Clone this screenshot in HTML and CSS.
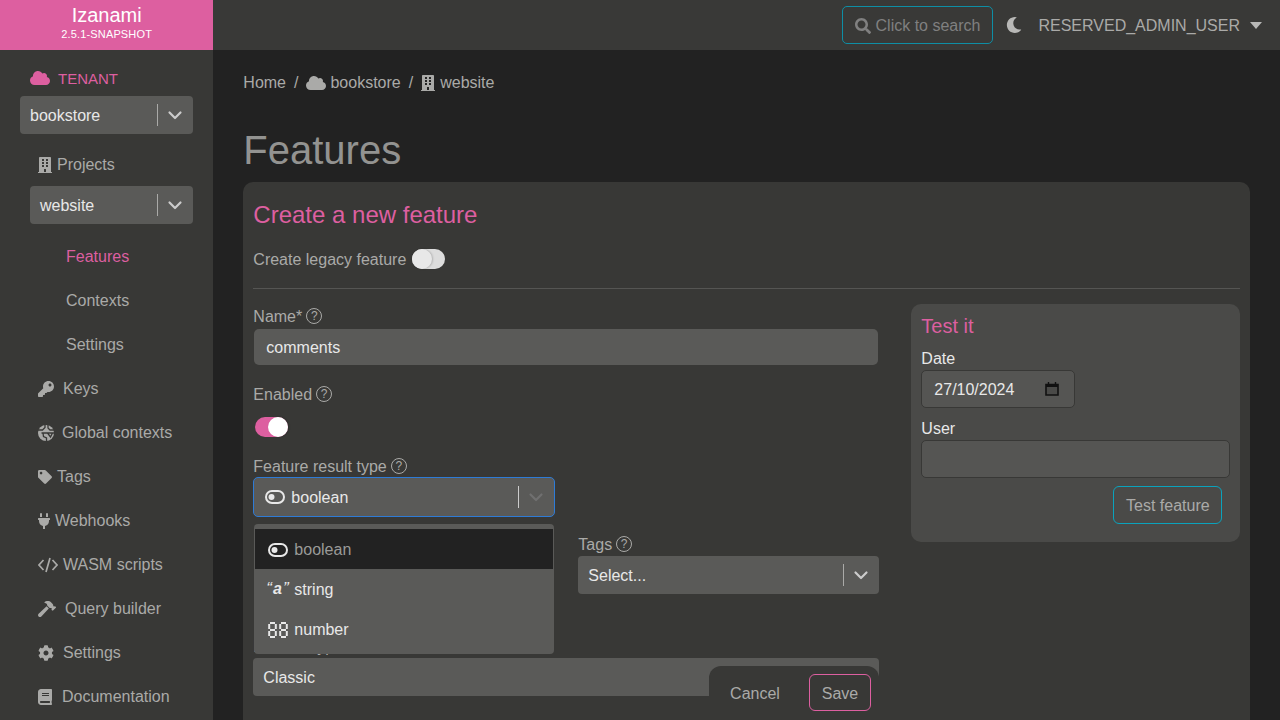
FILE: index.html
```html
<!DOCTYPE html>
<html lang="en">
<head>
    <meta charset="UTF-8">
    <meta name="viewport" content="width=device-width, initial-scale=1.0">
    <title>Izanami - Features</title>
    <link rel="stylesheet" href="styles.css">
</head>
<body>

    <!-- Icons used more than once -->
    <svg class="sprite" xmlns="http://www.w3.org/2000/svg">
        <symbol id="i-cloud" viewBox="0 0 640 512"><path d="M537.6 226.6c4.1-10.7 6.4-22.4 6.4-34.6 0-53-43-96-96-96-19.7 0-38.1 6-53.3 16.2C367 64.2 315.3 32 256 32c-88.4 0-160 71.6-160 160 0 2.7.1 5.4.2 8.1C40.2 219.8 0 273.2 0 336c0 79.5 64.5 144 144 144h368c70.7 0 128-57.3 128-128 0-61.9-44-113.6-102.4-125.4z"/></symbol>
        <symbol id="i-building" viewBox="0 0 448 512"><path d="M436 480h-20V24c0-13.255-10.745-24-24-24H56C42.745 0 32 10.745 32 24v456H12c-6.627 0-12 5.373-12 12v20h448v-20c0-6.627-5.373-12-12-12zM128 76c0-6.627 5.373-12 12-12h40c6.627 0 12 5.373 12 12v40c0 6.627-5.373 12-12 12h-40c-6.627 0-12-5.373-12-12V76zm0 96c0-6.627 5.373-12 12-12h40c6.627 0 12 5.373 12 12v40c0 6.627-5.373 12-12 12h-40c-6.627 0-12-5.373-12-12v-40zm52 148h-40c-6.627 0-12-5.373-12-12v-40c0-6.627 5.373-12 12-12h40c6.627 0 12 5.373 12 12v40c0 6.627-5.373 12-12 12zm76 160h-64v-84c0-6.627 5.373-12 12-12h40c6.627 0 12 5.373 12 12v84zm64-172c0 6.627-5.373 12-12 12h-40c-6.627 0-12-5.373-12-12v-40c0-6.627 5.373-12 12-12h40c6.627 0 12 5.373 12 12v40zm0-96c0 6.627-5.373 12-12 12h-40c-6.627 0-12-5.373-12-12v-40c0-6.627 5.373-12 12-12h40c6.627 0 12 5.373 12 12v40zm0-96c0 6.627-5.373 12-12 12h-40c-6.627 0-12-5.373-12-12V76c0-6.627 5.373-12 12-12h40c6.627 0 12 5.373 12 12v40z"/></symbol>
        <symbol id="i-chevron" viewBox="0 0 20 20"><path d="M4.5 7.5 10 13l5.500-5.500" fill="none" stroke="currentColor" stroke-width="2.200" stroke-linecap="round" stroke-linejoin="round"/></symbol>
        <symbol id="i-toggle" viewBox="0 0 20 14"><rect x="1" y="1" width="18" height="12" rx="6" fill="none" stroke="currentColor" stroke-width="2"/><circle cx="6.500" cy="7" r="3" fill="currentColor"/></symbol>
    </svg>

    <div class="app">
        <aside class="sidebar">
            <div class="brand">
                <div class="brand-name">Izanami</div>
                <div class="brand-version">2.5.1-SNAPSHOT</div>
            </div>

            <nav class="side-nav">
                <div class="tenant-title">
                    <svg class="icon icon-cloud"><use href="#i-cloud"/></svg>
                    <span>TENANT</span>
                </div>
                <div class="select side-select tenant-select">
                    <span class="select-value">bookstore</span>
                    <span class="select-sep"></span>
                    <svg class="select-arrow"><use href="#i-chevron"/></svg>
                </div>

                <a class="nav-item nav-projects">
                    <svg class="icon icon-building"><use href="#i-building"/></svg>
                    <span>Projects</span>
                </a>
                <div class="select side-select project-select">
                    <span class="select-value">website</span>
                    <span class="select-sep"></span>
                    <svg class="select-arrow"><use href="#i-chevron"/></svg>
                </div>

                <div class="sub-nav">
                    <a class="sub-item active">Features</a>
                    <a class="sub-item">Contexts</a>
                    <a class="sub-item">Settings</a>
                </div>

                <a class="nav-item">
                    <svg class="icon" viewBox="0 0 512 512"><path d="M512 176.001C512 273.203 433.202 352 336 352c-11.22 0-22.19-1.062-32.827-3.069l-24.012 27.014A23.999 23.999 0 0 1 261.223 384H224v40c0 13.255-10.745 24-24 24h-40v40c0 13.255-10.745 24-24 24H24c-13.255 0-24-10.745-24-24v-78.059c0-6.365 2.529-12.47 7.029-16.971l161.802-161.802C163.108 213.814 160 195.271 160 176 160 78.798 238.797.001 335.999 0 433.488-.001 512 78.511 512 176.001zM336 128c0 26.51 21.49 48 48 48s48-21.49 48-48-21.49-48-48-48-48 21.49-48 48z"/></svg>
                    <span class="gap-9">Keys</span>
                </a>
                <a class="nav-item">
                    <svg class="icon" viewBox="0 0 16 16"><circle cx="8" cy="8" r="8"/><path d="M0 5h4.500L7 2.500V0M10 0v3l2 2h4M3.500 8H16M5 8l.5 3.500L8.500 13v3M9.500 8l3 4 2-4" fill="none" stroke="#383836" stroke-width="1.300"/></svg>
                    <span class="gap-8">Global contexts</span>
                </a>
                <a class="nav-item">
                    <svg class="icon icon-small" viewBox="0 0 512 512"><path d="M0 252.118V48C0 21.49 21.49 0 48 0h204.118a48 48 0 0 1 33.941 14.059l211.882 211.882c18.745 18.745 18.745 49.137 0 67.882L293.823 497.941c-18.745 18.745-49.137 18.745-67.882 0L14.059 286.059A48 48 0 0 1 0 252.118zM112 64c-26.51 0-48 21.49-48 48s21.49 48 48 48 48-21.49 48-48-21.49-48-48-48z"/></svg>
                    <span class="gap-5">Tags</span>
                </a>
                <a class="nav-item">
                    <svg class="icon icon-plug" viewBox="0 0 384 512"><path d="M320,32a32,32,0,0,0-64,0v96h64Zm48,128H16A16,16,0,0,0,0,176v32a16,16,0,0,0,16,16H32v32A160.07,160.07,0,0,0,160,412.8V512h64V412.8A160.07,160.07,0,0,0,352,256V224h16a16,16,0,0,0,16-16V176A16,16,0,0,0,368,160ZM128,32a32,32,0,0,0-64,0v96h64Z"/></svg>
                    <span class="gap-5">Webhooks</span>
                </a>
                <a class="nav-item">
                    <svg class="icon icon-code" viewBox="0 0 20 16"><path d="M5.500 3 1 8l4.500 5M14.500 3 19 8l-4.500 5M12 1 8 15" fill="none" stroke="currentColor" stroke-width="1.700"/></svg>
                    <span class="gap-5">WASM scripts</span>
                </a>
                <a class="nav-item">
                    <svg class="icon icon-hammer" viewBox="0 0 576 512"><path d="M571.31 193.94l-22.63-22.63c-6.25-6.25-16.38-6.25-22.63 0l-11.31 11.31-28.9-28.9c5.63-21.31.36-44.9-16.35-61.61l-45.25-45.25c-62.48-62.48-163.79-62.48-226.28 0l90.51 45.25v18.75c0 16.97 6.74 33.25 18.75 45.25l49.14 49.14c16.71 16.71 40.3 21.98 61.61 16.35l28.9 28.9-11.31 11.31c-6.25 6.25-6.25 16.38 0 22.63l22.63 22.63c6.25 6.25 16.38 6.25 22.63 0l90.51-90.51c6.23-6.24 6.23-16.37-.02-22.62zm-286.72-15.2c-3.7-3.7-6.84-7.79-9.85-11.95L19.64 404.96c-25.57 23.88-26.26 64.19-1.53 88.93s65.05 24.05 88.93-1.53l238.13-255.07c-3.96-2.91-7.9-5.87-11.44-9.41l-49.14-49.14z"/></svg>
                    <span class="gap-9">Query builder</span>
                </a>
                <a class="nav-item">
                    <svg class="icon" viewBox="0 0 512 512"><path d="M487.4 315.7l-42.6-24.6c4.3-23.2 4.3-47 0-70.2l42.6-24.6c4.9-2.8 7.1-8.6 5.5-14-11.1-35.6-30-67.8-54.7-94.6-3.8-4.1-10-5.1-14.8-2.3L380.8 110c-17.9-15.4-38.5-27.3-60.8-35.1V25.800c0-5.600-3.900-10.500-9.400-11.700-36.700-8.200-74.300-7.800-109.200 0-5.500 1.200-9.400 6.100-9.400 11.700V75c-22.200 7.900-42.800 19.800-60.800 35.100L88.700 85.500c-4.900-2.800-11-1.900-14.800 2.300-24.700 26.700-43.600 58.900-54.700 94.600-1.700 5.400.6 11.200 5.500 14L67.300 221c-4.300 23.200-4.300 47 0 70.200l-42.600 24.600c-4.900 2.800-7.100 8.600-5.500 14 11.100 35.600 30 67.800 54.700 94.600 3.800 4.100 10 5.100 14.800 2.300l42.600-24.600c17.900 15.400 38.500 27.300 60.800 35.100v49.200c0 5.600 3.900 10.500 9.400 11.700 36.700 8.200 74.300 7.800 109.200 0 5.500-1.200 9.400-6.100 9.400-11.700v-49.200c22.200-7.900 42.800-19.800 60.800-35.100l42.600 24.600c4.900 2.800 11 1.900 14.800-2.300 24.700-26.700 43.600-58.900 54.700-94.600 1.500-5.500-.7-11.300-5.600-14.100zM256 336c-44.100 0-80-35.900-80-80s35.900-80 80-80 80 35.900 80 80-35.900 80-80 80z"/></svg>
                    <span class="gap-9">Settings</span>
                </a>
                <a class="nav-item">
                    <svg class="icon icon-book" viewBox="0 0 448 512"><path d="M448 360V24c0-13.300-10.700-24-24-24H96C43 0 0 43 0 96v320c0 53 43 96 96 96h328c13.300 0 24-10.700 24-24v-16c0-7.500-3.500-14.300-8.900-18.700-4.200-15.400-4.200-59.300 0-74.700 5.400-4.300 8.900-11.100 8.900-18.600zM128 134c0-3.300 2.700-6 6-6h212c3.300 0 6 2.700 6 6v20c0 3.300-2.700 6-6 6H134c-3.300 0-6-2.700-6-6v-20zm0 64c0-3.300 2.700-6 6-6h212c3.300 0 6 2.700 6 6v20c0 3.300-2.700 6-6 6H134c-3.300 0-6-2.700-6-6v-20zm253.400 250H96c-17.700 0-32-14.300-32-32 0-17.600 14.400-32 32-32h285.400c-1.900 17.100-1.900 46.900 0 64z"/></svg>
                    <span class="gap-10">Documentation</span>
                </a>
            </nav>
        </aside>

        <div class="page">
            <header class="topbar">
                <button class="search-btn">
                    <svg class="icon icon-search" viewBox="0 0 512 512"><path d="M505 442.700L405.300 343c-4.500-4.500-10.600-7-17-7H372c27.600-35.300 44-79.700 44-128C416 93.100 322.900 0 208 0S0 93.100 0 208s93.100 208 208 208c48.300 0 92.700-16.400 128-44v16.300c0 6.400 2.500 12.500 7 17l99.700 99.700c9.400 9.400 24.600 9.400 33.900 0l28.300-28.300c9.400-9.400 9.400-24.600.1-34zM208 336c-70.700 0-128-57.200-128-128 0-70.700 57.200-128 128-128 70.700 0 128 57.200 128 128 0 70.700-57.200 128-128 128z"/></svg>
                    Click to search
                </button>
                <svg class="icon icon-moon" viewBox="0 0 512 512"><path d="M283.211 512c78.962 0 151.079-35.925 198.857-94.792 7.068-8.708-.639-21.430-11.562-19.350-124.203 23.654-238.262-71.576-238.262-196.954 0-72.222 38.662-138.635 101.498-174.394 9.686-5.512 7.250-20.197-3.756-22.230A258.156 258.156 0 0 0 283.211 0c-141.309 0-256 114.511-256 256 0 141.309 114.511 256 256 256z"/></svg>
                <span class="user-name">RESERVED_ADMIN_USER</span>
                <span class="user-caret"></span>
            </header>

            <main class="content">
                <div class="breadcrumb">
                    <a>Home</a>
                    <span class="crumb-sep">/</span>
                    <svg class="icon icon-cloud"><use href="#i-cloud"/></svg>
                    <a class="crumb-tight">bookstore</a>
                    <span class="crumb-sep">/</span>
                    <svg class="icon icon-building"><use href="#i-building"/></svg>
                    <a class="crumb-site">website</a>
                </div>

                <h1>Features</h1>

                <section class="card">
                    <h2>Create a new feature</h2>
                    <div class="legacy-row">
                        <span class="legacy-text">Create legacy feature</span>
                        <span class="switch"><span class="switch-knob"></span></span>
                    </div>
                    <hr>

                    <div class="form-grid">
                        <form class="feature-form">
                            <label class="field-label"><span class="label-text">Name*</span> <span class="help">?</span></label>
                            <div class="text-input name-input">comments</div>

                            <label class="field-label enabled-label"><span class="label-text">Enabled</span> <span class="help">?</span></label>
                            <span class="switch switch-on"><span class="switch-knob"></span></span>

                            <div class="type-field">
                                <label class="field-label"><span class="label-text">Feature result type</span> <span class="help">?</span></label>
                                <div class="select type-select">
                                    <svg class="type-icon"><use href="#i-toggle"/></svg>
                                    <span class="select-value">boolean</span>
                                    <span class="select-sep"></span>
                                    <svg class="select-arrow"><use href="#i-chevron"/></svg>
                                </div>

                                <!-- Open dropdown, sits above the fields below -->
                                <ul class="type-menu">
                                    <li class="selected"><svg class="type-icon"><use href="#i-toggle"/></svg>boolean</li>
                                    <li><span class="quote-icon">“<b>a</b>”</span>string</li>
                                    <li>
                                        <svg class="type-icon number-icon" viewBox="0 0 20 16"><path d="M2 1h5M2 8h5M2 15h5M13 1h5M13 8h5M13 15h5M1.200 2v5M1.200 9v5M7.800 2v5M7.800 9v5M12.200 2v5M12.200 9v5M18.800 2v5M18.800 9v5" fill="none" stroke="currentColor" stroke-width="2"/></svg>number
                                    </li>
                                </ul>
                            </div>

                            <div class="two-cols">
                                <div class="col-blank"></div>
                                <div>
                                    <label class="field-label"><span class="label-text">Tags</span> <span class="help">?</span></label>
                                    <div class="select">
                                        <span class="select-value">Select...</span>
                                        <span class="select-sep"></span>
                                        <svg class="select-arrow"><use href="#i-chevron"/></svg>
                                    </div>
                                </div>
                            </div>

                            <label class="field-label strategy-label"><span class="label-text">Feature type</span></label>
                            <div class="select strategy-select">
                                <span class="select-value">Classic</span>
                            </div>
                        </form>

                        <aside class="test-panel">
                            <h3>Test it</h3>
                            <label class="test-label">Date</label>
                            <div class="test-input date-input">
                                <span class="date-value">27/10/2024</span>
                                <svg class="calendar" viewBox="0 0 14 14"><path d="M1 2.500h12v10.500H1z" fill="#4a4a48" stroke="#111" stroke-width="1.600"/><path d="M1 3h12v2H1z" fill="#111"/><path d="M3.500 0v2M10.500 0v2" stroke="#111" stroke-width="1.400"/></svg>
                            </div>
                            <label class="test-label user-label">User</label>
                            <div class="test-input"></div>
                            <div class="test-actions">
                                <button class="test-btn">Test feature</button>
                            </div>
                        </aside>
                    </div>

                    <div class="form-actions">
                        <button class="cancel-btn">Cancel</button>
                        <button class="save-btn">Save</button>
                    </div>
                </section>
            </main>
        </div>
    </div>

</body>
</html>
```

FILE: styles.css
```css
* {
    box-sizing: border-box;
}

html, body {
    height: 100%;
}

body {
    margin: 0;
    overflow: hidden;
    font-family: "Liberation Sans", Arial, sans-serif;
    font-size: 16px;
    color: #aaaaa8;
    background-color: #222222;
}

.sprite {
    display: none;
}

.icon {
    flex: none;
    width: 16px;
    height: 16px;
    fill: currentColor;
}

.app {
    display: flex;
    height: 720px;
}

/* Sidebar */
.sidebar {
    flex: none;
    width: 213.33px;
    background-color: #383836;
}

.brand {
    height: 50px;
    padding-top: 4px;
    text-align: center;
    color: #ffffff;
    background-color: #dd5fa0;
}

.brand-name {
    font-size: 20px;
    line-height: 22px;
}

.brand-version {
    font-size: 11px;
    line-height: 16px;
    letter-spacing: 0.15px;
}

.side-nav {
    padding: 18px 20px 0;
}

.tenant-title {
    display: flex;
    align-items: center;
    gap: 8px;
    height: 20px;
    padding-left: 10px;
    font-size: 15px;
    color: #dd5fa0;
}

.icon-cloud {
    width: 20px;
}

.tenant-select {
    margin-top: 8px;
}

.nav-item {
    display: flex;
    align-items: center;
    height: 44px;
    padding-top: 2px;
    padding-left: 18px;
}

.nav-projects {
    height: 30px;
    margin-top: 15px;
}

.nav-projects span {
    margin-left: 5px;
}

.nav-projects .icon {
    width: 14px;
}

.project-select {
    margin: 7px 0 10px 10px;
}

.sub-item {
    display: flex;
    align-items: center;
    height: 44px;
    padding-top: 2px;
    padding-left: 46px;
}

.sub-item.active {
    color: #dd5fa0;
}

.gap-5 {
    margin-left: 5px;
}

.gap-8 {
    margin-left: 8px;
}

.gap-9 {
    margin-left: 9px;
}

.gap-10 {
    margin-left: 10px;
}

.icon-small {
    width: 14px;
    height: 14px;
}

.icon-plug {
    width: 12px;
    height: 16px;
}

.icon-code {
    width: 20px;
}

.icon-hammer {
    width: 18px;
}

.icon-book {
    width: 14px;
}

/* Selects */
.select {
    display: flex;
    align-items: center;
    height: 38px;
    padding: 0 8px 0 10px;
    border-radius: 4px;
    color: #e8e8e8;
    background-color: #5a5a58;
}

.select-value {
    flex: 1;
    padding-top: 2px;
}

.select-sep {
    width: 1px;
    height: 22px;
    background-color: #aaaaa8;
}

.select-arrow {
    width: 20px;
    height: 20px;
    margin-left: 7px;
    color: #cccccc;
}

/* Top bar */
.page {
    flex: 1;
    display: flex;
    flex-direction: column;
    min-width: 0;
}

.topbar {
    flex: none;
    display: flex;
    align-items: center;
    height: 50px;
    padding-right: 18px;
    background-color: #393937;
}

.search-btn {
    display: flex;
    align-items: center;
    gap: 5px;
    height: 38px;
    margin-left: auto;
    padding: 2px 12px 0;
    border: 1px solid #0e8ea5;
    border-radius: 5px;
    font: inherit;
    color: #808080;
    background: transparent;
}

.icon-moon {
    margin-left: 13px;
    color: #b8b8b6;
}

.user-name {
    margin-left: 16px;
    padding-top: 2px;
}

.user-caret {
    margin-left: 10px;
    border-top: 7px solid #b8b8b6;
    border-left: 6px solid transparent;
    border-right: 6px solid transparent;
}

/* Main content */
.content {
    flex: 1;
    padding: 0 30px;
    overflow: hidden;
}

.breadcrumb {
    display: flex;
    align-items: center;
    height: 24px;
    margin-top: 20px;
    padding-top: 2px;
}

.crumb-sep {
    margin: 0 8px;
}

.crumb-tight {
    margin-left: 4px;
}

.crumb-site {
    margin-left: 5px;
}

.breadcrumb .icon-building {
    width: 14px;
}

h1 {
    margin: 33px 0 0;
    padding-bottom: 9px;
    font-size: 40px;
    font-weight: normal;
    line-height: 46px;
    color: #939391;
}

.card {
    position: relative;
    height: 700px;
    padding: 10px;
    border-radius: 10px;
    background-color: #383836;
}

h2 {
    margin: 10px 0 0;
    font-size: 24px;
    font-weight: normal;
    line-height: 26px;
    color: #dd5fa0;
}

.legacy-row {
    display: flex;
    align-items: center;
    gap: 6px;
    height: 24px;
    margin-top: 19px;
}

.legacy-text {
    padding-top: 2px;
}

hr {
    height: 1px;
    margin: 17px 0 15px;
    border: 0;
    background-color: #555553;
}

.switch {
    display: block;
    position: relative;
    width: 33px;
    height: 20px;
    border-radius: 10px;
    background-color: #dddddd;
}

.switch-knob {
    position: absolute;
    top: 0;
    left: 0;
    width: 20px;
    height: 20px;
    border-radius: 50%;
    background-color: #e8e8e8;
    box-shadow: 1px 0 2px rgba(0, 0, 0, 0.2);
}

.switch-on {
    margin: 11px 0 0 2px;
    background-color: #dd5fa0;
}

.switch-on .switch-knob {
    left: 13px;
    background-color: #ffffff;
}

/* Form */
.form-grid {
    display: grid;
    grid-template-columns: 627px 329px;
    column-gap: 31px;
    align-items: start;
}

.field-label {
    display: flex;
    align-items: center;
    gap: 4px;
    height: 24px;
}

.label-text {
    padding-top: 2px;
}

.help {
    display: inline-block;
    width: 16px;
    height: 16px;
    border: 1px solid #aaaaa8;
    border-radius: 50%;
    font-size: 12px;
    line-height: 14px;
    text-align: center;
}

.text-input {
    display: flex;
    align-items: center;
    height: 36px;
    padding-top: 2px;
    padding-left: 12px;
    border-radius: 5px;
    color: #e8e8e8;
    background-color: #5a5a58;
}

.name-input {
    width: 624px;
    margin: 1px 0 0 1px;
}

.enabled-label {
    margin-top: 17px;
}

.type-field {
    position: relative;
    margin-top: 17px;
}

.type-select {
    width: 302px;
    height: 40px;
    margin-top: -1px;
    padding-left: 11px;
    border: 1px solid #2e7bd6;
    border-radius: 5px;
}

.type-select .select-sep {
    background-color: #cccccc;
}

.type-select .select-arrow {
    color: #707070;
}

.type-icon {
    flex: none;
    width: 20px;
    height: 14px;
    margin-right: 6px;
    color: #e8e8e8;
}

.type-menu {
    position: absolute;
    z-index: 2;
    top: 70px;
    left: 1px;
    width: 300px;
    margin: 0;
    padding: 5px 1px;
    list-style: none;
    border-radius: 4px;
    color: #e8e8e8;
    background-color: #5a5a58;
}

.type-menu li {
    display: flex;
    align-items: center;
    height: 40px;
    padding-top: 2px;
    padding-left: 13px;
}

.type-menu li.selected {
    color: #9a9a98;
    background-color: #222222;
}

.type-menu li.selected .type-icon {
    color: #e8e8e8;
}

.quote-icon {
    width: 28px;
    margin-left: -2px;
    margin-top: -3px;
    font-size: 17px;
    font-style: italic;
    line-height: 18px;
}

.quote-icon b {
    margin: 0 1px;
    font-size: 16px;
}

.number-icon {
    height: 16px;
}

.two-cols {
    display: grid;
    grid-template-columns: 301px 301px;
    column-gap: 24px;
    margin-top: 15px;
}

.strategy-label {
    margin-top: 40px;
}

.strategy-select {
    width: 626px;
}

/* Test panel */
.test-panel {
    height: 238px;
    padding: 10px;
    border-radius: 10px;
    color: #e8e8e8;
    background-color: #4a4a48;
}

h3 {
    margin: 0;
    font-size: 20px;
    font-weight: normal;
    line-height: 24px;
    color: #dd5fa0;
}

.test-label {
    display: block;
    margin-top: 11px;
    line-height: 20px;
}

.test-input {
    height: 38px;
    margin-top: 1px;
    border: 1px solid #383836;
    border-radius: 5px;
    background-color: #555553;
}

.date-input {
    display: flex;
    align-items: center;
    justify-content: space-between;
    width: 154px;
    padding: 0 15px 0 12px;
}

.date-value {
    padding-top: 2px;
}

.calendar {
    width: 14px;
    height: 14px;
}

.user-label {
    margin-top: 11px;
}

.test-actions {
    display: flex;
    justify-content: flex-end;
    margin-top: 8px;
    padding-right: 8px;
}

.test-btn {
    width: 109px;
    height: 38px;
    padding-top: 2px;
    border: 1px solid #0aa3bd;
    border-radius: 6px;
    font: inherit;
    color: #aaaaa8;
    background: transparent;
}

/* Floating Save / Cancel bar */
.form-actions {
    position: absolute;
    z-index: 3;
    top: 484px;
    right: 371px;
    display: flex;
    align-items: flex-start;
    justify-content: space-between;
    width: 170px;
    height: 60px;
    padding: 8px 8px 0 8px;
    border-top-left-radius: 12px;
    border-top-right-radius: 12px;
    background-color: #383836;
}

.cancel-btn,
.save-btn {
    height: 37px;
    padding-top: 4px;
    border: 1px solid transparent;
    border-radius: 6px;
    font: inherit;
    color: #aaaaa8;
    background: transparent;
}

.cancel-btn {
    width: 76px;
}

.save-btn {
    width: 62px;
    border-color: #dd5fa0;
}
```
